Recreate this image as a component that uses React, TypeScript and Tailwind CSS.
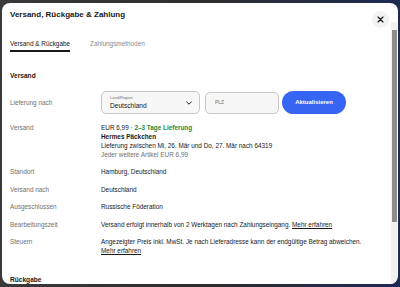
import React from "react";

const rows = [
  { label: "Standort", value: "Hamburg, Deutschland" },
  { label: "Versand nach", value: "Deutschland" },
  { label: "Ausgeschlossen", value: "Russische Föderation" },
];

const Row: React.FC<{ label: string; children: React.ReactNode }> = ({ label, children }) => (
  <div className="flex items-start leading-[9px]">
    <div className="w-[91px] shrink-0 text-[#707070]">{label}</div>
    <div className="flex-1 text-[#191919]">{children}</div>
  </div>
);

export default function App() {
  return (
    <div
      className="w-[400px] h-[287px] overflow-hidden bg-gradient-to-r from-[#3a3a3a] via-[#2e2c2c] to-[#1d2a52] pt-[3px] pl-[2px] pr-[2px]"
      style={{ fontFamily: '"Liberation Sans", Arial, sans-serif' }}
    >
      <div className="relative h-[281px] rounded-[8px] bg-white flex flex-col overflow-hidden">
        {/* header */}
        <div className="flex items-start h-[19px] shrink-0 pl-[8px]">
          <h1 className="mt-[7px] text-[8px] leading-[10px] font-bold text-[#191919]">
            Versand, Rückgabe &amp; Zahlung
          </h1>
          <button className="ml-auto mt-[8px] mr-[9px] w-[17px] h-[17px] rounded-full bg-[#f2f2f2] flex items-center justify-center">
            <svg width="7" height="7" viewBox="0 0 10 10">
              <path d="M1.5 1.5 L8.5 8.5 M8.5 1.5 L1.5 8.5" stroke="#191919" strokeWidth="1.8" strokeLinecap="round" />
            </svg>
          </button>
        </div>

        <div className="flex flex-1 min-h-0">
          <div className="flex-1 pl-[8px] text-[6.4px] text-[#191919]">
            {/* tabs */}
            <div className="flex mt-[17px] gap-[20px]">
              <div className="flex flex-col">
                <span className="text-[6.4px] leading-[10px] font-medium text-[#191919]">Versand &amp; Rückgabe</span>
                <div className="mt-[1px] h-[2px] bg-[#191919]" />
              </div>
              <span className="text-[6.4px] leading-[10px] text-[#8a8a8a]">Zahlungsmethoden</span>
            </div>

            <h2 className="mt-[19px] text-[6.6px] leading-[10px] font-bold">Versand</h2>

            {/* delivery form */}
            <div className="mt-[10px] flex items-center h-[23px]">
              <div className="w-[91px] shrink-0 text-[#707070]">Lieferung nach</div>
              <div className="w-[99px] h-[23px] rounded-[5px] border border-[#c7c7c7] bg-[#f7f7f7] flex items-center pl-[8px] pr-[7px]">
                <div className="flex flex-col flex-1">
                  <span className="text-[4px] leading-[5px] text-[#707070]">Land/Region</span>
                  <span className="text-[6.6px] leading-[9px] mt-[1px]">Deutschland</span>
                </div>
                <svg width="6" height="4" viewBox="0 0 10 6">
                  <path d="M1 1 L5 5 L9 1" fill="none" stroke="#191919" strokeWidth="1.6" strokeLinecap="round" strokeLinejoin="round" />
                </svg>
              </div>
              <div className="ml-[5px] w-[74px] h-[22px] rounded-[5px] border border-[#c7c7c7] bg-[#f7f7f7] flex items-center pl-[9px]">
                <span className="text-[5px] text-[#707070]">PLZ</span>
              </div>
              <button className="ml-[3px] w-[64px] h-[23px] rounded-full bg-[#3665f3] text-white text-[6px] font-bold">
                Aktualisieren
              </button>
            </div>

            {/* rows */}
            <div className="mt-[8.5px] flex flex-col gap-[8.6px]">
              <Row label="Versand">
                <div>
                  EUR 6,99 · <span className="font-bold text-[#1e8a3d]">2–3 Tage Lieferung</span>
                </div>
                <div className="font-bold">Hermes Päckchen</div>
                <div>Lieferung zwischen Mi, 26. Mär und Do, 27. Mär nach 64319</div>
                <div className="text-[#707070]">Jeder weitere Artikel EUR 6,99</div>
              </Row>
              {rows.map((r) => (
                <Row key={r.label} label={r.label}>
                  {r.value}
                </Row>
              ))}
              <Row label="Bearbeitungszeit">
                Versand erfolgt innerhalb von 2 Werktagen nach Zahlungseingang.{" "}
                <span className="underline">Mehr erfahren</span>
              </Row>
              <Row label="Steuern">
                <div>Angezeigter Preis inkl. MwSt. Je nach Lieferadresse kann der endgültige Betrag abweichen.</div>
                <div className="underline">Mehr erfahren</div>
              </Row>
            </div>

            <h2 className="mt-[20px] text-[6.6px] leading-[10px] font-bold">Rückgabe</h2>
          </div>

          {/* scrollbar */}
          <div className="w-[6px] mr-[1px] shrink-0 bg-[#f1f1f1] pt-[8px]">
            <div className="mx-auto w-[5px] h-[192px] bg-[#8c8c8c]" />
          </div>
        </div>
      </div>
    </div>
  );
}
